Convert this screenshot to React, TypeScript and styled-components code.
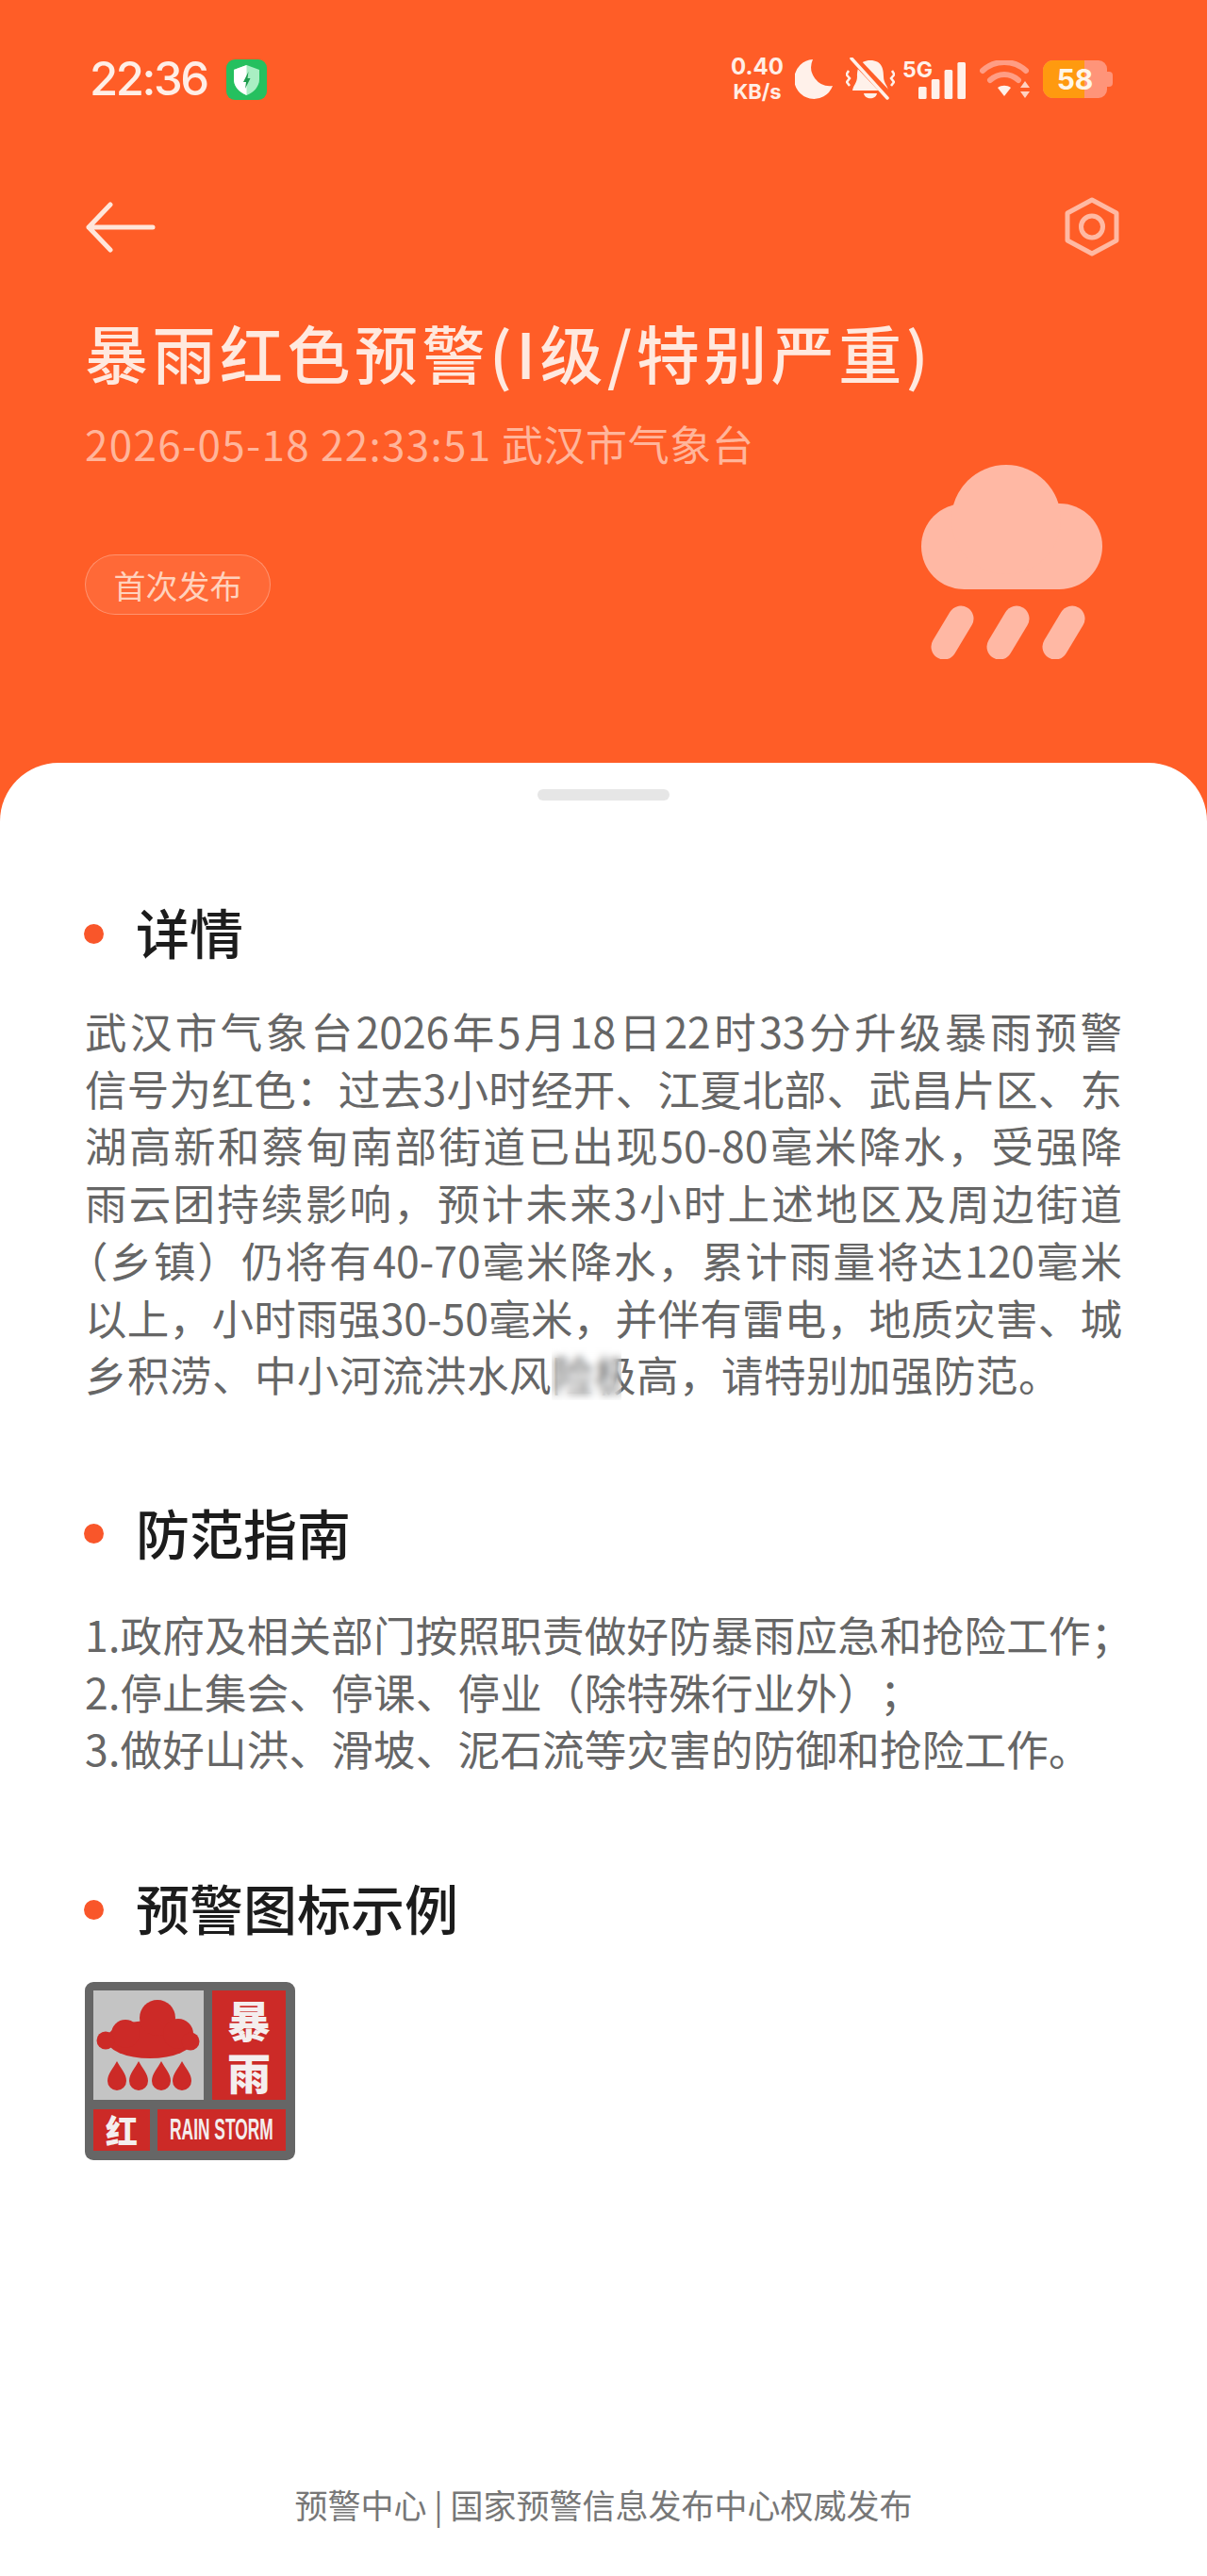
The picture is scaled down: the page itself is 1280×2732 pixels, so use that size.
import styled, { createGlobalStyle } from "styled-components"

const GlobalStyle = createGlobalStyle`
  html, body {
    margin: 0;
    padding: 0;
    background: #ff5d27;
  }
  * {
    box-sizing: border-box;
  }
`

const cjk = `"Noto Sans CJK SC", "Noto Sans", sans-serif`

const Page = styled.div`
  width: 1280px;
  height: 2732px;
  display: flex;
  flex-direction: column;
  background: #ff5d27;
  font-family: ${cjk};
  overflow: hidden;
`

const Header = styled.header`
  height: 809px;
  flex: none;
  padding: 60px 90px 0;
  display: flex;
  flex-direction: column;
`

const StatusBar = styled.div`
  height: 48px;
  display: flex;
  align-items: center;
  justify-content: space-between;
  color: #ffeee6;
`

const StatusLeft = styled.div`
  display: flex;
  align-items: center;
  gap: 20px;
  padding-left: 5px;
`

const Clock = styled.span`
  font-family: "Inter", sans-serif;
  font-size: 49px;
  font-weight: 500;
  letter-spacing: -2.4px;
  line-height: 48px;
`

const StatusRight = styled.div`
  display: flex;
  align-items: center;
  margin-right: 10px;
`

const Speed = styled.div`
  width: 56px;
  margin-right: 12px;
  display: flex;
  flex-direction: column;
  align-items: center;
  font-family: "Inter", sans-serif;
  font-weight: 700;
  line-height: 20px;
`

const SpeedValue = styled.span`
  font-size: 24px;
`

const SpeedUnit = styled.span`
  font-size: 22px;
  margin-top: 6px;
`

const SignalWrap = styled.div`
  position: relative;
  width: 68px;
  height: 46px;
  margin-left: 8px;
`

const NetworkLabel = styled.span`
  position: absolute;
  left: 0;
  top: 0;
  font-family: "Inter", sans-serif;
  font-size: 23px;
  font-weight: 700;
  line-height: 26px;
  color: #fff1ea;
`

const Battery = styled.div`
  position: relative;
  width: 68px;
  height: 40px;
  margin: 0 6px 0 13px;
  border-radius: 11px 9px 9px 11px;
  background: #ff9479;
  display: flex;
  align-items: center;
  justify-content: center;
  color: #fff6e8;
  font-family: "Inter", sans-serif;
  font-weight: 700;
  font-size: 30px;

  &::after {
    content: "";
    position: absolute;
    left: 100%;
    top: 12px;
    width: 6px;
    height: 16px;
    border-radius: 0 4px 4px 0;
    background: #ff9479;
  }
`

const BatteryFill = styled.span`
  position: absolute;
  left: 0;
  top: 0;
  bottom: 0;
  border-radius: 11px 0 0 11px;
  background: #ff9a0f;
`

const BatteryText = styled.span`
  position: relative;
`

const NavRow = styled.div`
  margin-top: 101px;
  height: 63px;
  padding-right: 3px;
  display: flex;
  align-items: center;
  justify-content: space-between;
`

const Title = styled.h1`
  margin: 53px 0 0;
  font-size: 67px;
  line-height: 96px;
  font-weight: 500;
  color: #ffe9df;
  letter-spacing: 4.5px;
  white-space: nowrap;
`

const Hero = styled.div`
  margin-top: 19px;
  display: flex;
  justify-content: space-between;
  align-items: flex-start;
`

const HeroText = styled.div`
  display: flex;
  flex-direction: column;
  align-items: flex-start;
`

const Meta = styled.div`
  font-size: 44px;
  line-height: 60px;
  letter-spacing: 0.6px;
  color: #ffb59b;
  white-space: nowrap;
`

const MetaTime = styled.span`
  letter-spacing: 1.3px;
`

const Chip = styled.div`
  margin-top: 88px;
  width: 197px;
  height: 64px;
  border-radius: 32px;
  border: 1.5px solid rgba(255, 255, 255, 0.28);
  background: rgba(255, 255, 255, 0.08);
  display: flex;
  align-items: center;
  justify-content: center;
  font-size: 34px;
  color: #ffd2bd;
`

const RainIcon = styled.svg`
  width: 192px;
  height: 206px;
  margin: 53px 21px 0 0;
  flex: none;
`

const Sheet = styled.main`
  flex: 1;
  background: #fff;
  border-radius: 62px 62px 0 0;
  padding: 28px 90px 0;
  display: flex;
  flex-direction: column;
`

const Handle = styled.div`
  width: 140px;
  height: 12px;
  border-radius: 6px;
  background: #e6e6e6;
  align-self: center;
`

const Section = styled.section<{ $gap: number }>`
  margin-top: ${({ $gap }) => $gap}px;
`

const Heading = styled.h2`
  margin: 0;
  height: 80px;
  display: flex;
  align-items: center;
  gap: 34px;
  font-size: 57px;
  font-weight: 500;
  color: #1c1c1c;

  &::before {
    content: "";
    width: 21px;
    height: 21px;
    margin: 6px 0 0 -1px;
    border-radius: 50%;
    background: #f9562a;
  }
`

const Body = styled.div<{ $top: number }>`
  margin-top: ${({ $top }) => $top}px;
  width: 1100px;
  font-size: 44.5px;
  line-height: 60.7px;
  color: #666;
  text-spacing-trim: space-all;
`

const Line = styled.div`
  letter-spacing: 0.25px;
  white-space: nowrap;
`

const JustifiedLine = styled.div`
  text-align: justify;
  text-align-last: justify;
`

const LastLine = styled.div`
  letter-spacing: 0.5px;
  white-space: nowrap;
`

const LeadParen = styled.span`
  margin-left: -20px;
`

const Masked = styled.span`
  position: relative;

  &::after {
    content: "";
    position: absolute;
    left: 0;
    top: 4px;
    bottom: 4px;
    width: 74px;
    backdrop-filter: blur(4px);
  }
`

const Badge = styled.div`
  margin-top: 40px;
  width: 223px;
  height: 189px;
  padding: 9px;
  border-radius: 9px;
  background: #666;
  display: grid;
  grid-template-columns: 60px 8px 49px 9px 78px;
  grid-template-rows: 116px 44px;
  row-gap: 10px;
`

const BadgeSky = styled.div`
  grid-column: 1 / 4;
  grid-row: 1;
  background: #c4c4c4;
`

const BadgeSign = styled.div`
  grid-column: 5;
  grid-row: 1;
  background: #cc2a27;
  display: flex;
  flex-direction: column;
  align-items: center;
  justify-content: center;
  color: #f4eeee;
  font-size: 46px;
  font-weight: 900;
  line-height: 55px;
`

const BadgeLevel = styled.div`
  grid-column: 1;
  grid-row: 2;
  background: #cc2a27;
  display: flex;
  align-items: center;
  justify-content: center;
  color: #f4eeee;
  font-size: 34px;
  font-weight: 900;
  line-height: 44px;
`

const BadgeName = styled.div`
  grid-column: 3 / 6;
  grid-row: 2;
  overflow: hidden;
  background: #cc2a27;
  display: flex;
  align-items: center;
  justify-content: center;
  color: #f4eeee;
`

const BadgeNameText = styled.span`
  flex: none;
  font-family: "Liberation Sans", sans-serif;
  font-size: 31px;
  font-weight: 700;
  white-space: nowrap;
  transform: scaleX(0.56);
`

const Footer = styled.footer`
  margin-top: auto;
  margin-bottom: 54px;
  text-align: center;
  font-size: 35px;
  line-height: 44px;
  color: #777;
`

function Shield() {
  return (
    <svg width="43" height="43" viewBox="0 0 43 43">
      <rect width="43" height="43" rx="9" fill="#25c05f" />
      <path d="M21.5 6 L35 11 V21 C35 29 29 35 21.5 38 C14 35 8 29 8 21 V11 Z" fill="#a9efc3" />
      <path d="M21.5 6 L8 11 V21 C8 29 14 35 21.5 38 Z" fill="#fff" />
      <path d="M23.5 13 L18 24 H21 L20 31 L25.5 20 H22.5 Z" fill="#1f9c4e" />
    </svg>
  )
}

function Moon() {
  return (
    <svg width="40" height="42" viewBox="0 0 40 42">
      <path d="M19 0 A21 21 0 1 0 40 28 A20 20 0 0 1 19 0 Z" fill="#fff1ea" />
    </svg>
  )
}

function MutedBell() {
  return (
    <svg width="52" height="46" viewBox="0 0 52 46" style={{ marginLeft: 14 }}>
      <path d="M26 3 C14 3 12 12 12 20 C12 27 8 29 7 35 H45 C44 29 40 27 40 20 C40 12 38 3 26 3 Z" fill="#fff1ea" />
      <path d="M19 38 H33 C32 45 20 45 19 38 Z" fill="#fff1ea" />
      <path d="M9 2 L46 41" stroke="#ff5d27" strokeWidth="8.5" />
      <path d="M6 1 L44 43" stroke="#fff1ea" strokeWidth="3.5" strokeLinecap="round" />
      <path d="M3 14 L0.5 18 L4 22 L1 26 L4 30" fill="none" stroke="#fff1ea" strokeWidth="2.5" />
      <path d="M49 14 L51.5 18 L48 22 L51 26 L48 30" fill="none" stroke="#fff1ea" strokeWidth="2.5" />
    </svg>
  )
}

function SignalBars() {
  return (
    <svg width="68" height="46" viewBox="0 0 68 46">
      <rect x="17" y="31" width="8.6" height="13" rx="1.5" fill="#fff1ea" />
      <rect x="30.8" y="23" width="8.6" height="21" rx="1.5" fill="#fff1ea" />
      <rect x="44.6" y="13" width="8.6" height="31" rx="1.5" fill="#fff1ea" />
      <rect x="58.4" y="5" width="8.6" height="39" rx="1.5" fill="#fff1ea" />
    </svg>
  )
}

function Wifi() {
  return (
    <svg width="54" height="40" viewBox="0 0 54 40" style={{ marginLeft: 14 }}>
      <path d="M3 11 C16 -1 36 -1 49 11" fill="none" stroke="#ff9d84" strokeWidth="6" strokeLinecap="round" />
      <path d="M11 21 C20 13 32 13 41 21" fill="none" stroke="#ff9d84" strokeWidth="6" strokeLinecap="round" />
      <path d="M19 29 C23 26 29 26 33 29 L26 38 Z" fill="#fff1ea" />
      <path d="M48 22 L53 29 H43 Z M48 40 L53 33 H43 Z" fill="#ffd2c2" />
    </svg>
  )
}

function BackArrow() {
  return (
    <svg width="75" height="54" viewBox="0 0 75 54">
      <path
        d="M72 27 H4 M27 3 L4 27 L27 51"
        fill="none"
        stroke="#ffe6da"
        strokeWidth="5"
        strokeLinecap="round"
        strokeLinejoin="round"
      />
    </svg>
  )
}

function SettingsHex() {
  return (
    <svg width="58" height="63" viewBox="0 0 58 63">
      <path
        d="M29 3 L55 17 V46 L29 60 L3 46 V17 Z"
        fill="none"
        stroke="#ffb9a3"
        strokeWidth="5"
        strokeLinejoin="round"
      />
      <circle cx="29" cy="31.5" r="11.5" fill="none" stroke="#ffb9a3" strokeWidth="5" />
    </svg>
  )
}

function BadgeCloud() {
  return (
    <svg width="117" height="116" viewBox="0 0 117 116">
      <g fill="#cc2a27">
        <ellipse cx="60" cy="52" rx="46" ry="20" />
        <circle cx="68" cy="29" r="19" />
        <circle cx="34" cy="46" r="15" />
        <circle cx="13" cy="53" r="9.5" />
        <circle cx="90" cy="46" r="16" />
        <circle cx="103" cy="54" r="9.5" />
      </g>
      {[25, 48, 72, 94].map((x) => (
        <path
          key={x}
          d={`M${x} 75 C${x + 4} 83 ${x + 10} 88 ${x + 10} 96 A10 10 0 0 1 ${x - 10} 96 C${x - 10} 88 ${x - 4} 83 ${x} 75 Z`}
          fill="#cc2a27"
        />
      ))}
    </svg>
  )
}

export default function App() {
  return (
    <Page>
      <GlobalStyle />
      <Header>
        <StatusBar>
          <StatusLeft>
            <Clock>22:36</Clock>
            <Shield />
          </StatusLeft>
          <StatusRight>
            <Speed>
              <SpeedValue>0.40</SpeedValue>
              <SpeedUnit>KB/s</SpeedUnit>
            </Speed>
            <Moon />
            <MutedBell />
            <SignalWrap>
              <NetworkLabel>5G</NetworkLabel>
              <SignalBars />
            </SignalWrap>
            <Wifi />
            <Battery>
              <BatteryFill style={{ width: "65%" }} />
              <BatteryText>58</BatteryText>
            </Battery>
          </StatusRight>
        </StatusBar>

        <NavRow>
          <BackArrow />
          <SettingsHex />
        </NavRow>

        <Title>暴雨红色预警(I级/特别严重)</Title>

        <Hero>
          <HeroText>
            <Meta>
              <MetaTime>2026-05-18 22:33:51</MetaTime> 武汉市气象台
            </Meta>
            <Chip>首次发布</Chip>
          </HeroText>
          <RainIcon viewBox="0 0 192 206">
            <g fill="#ffb8a4">
              <rect x="0" y="41" width="192" height="91" rx="45.5" />
              <circle cx="90" cy="58" r="58" />
            </g>
            <g stroke="#ffb8a4" strokeWidth="27" strokeLinecap="round">
              <path d="M42 163 L24 193" />
              <path d="M101 163 L83 193" />
              <path d="M160 163 L142 193" />
            </g>
          </RainIcon>
        </Hero>
      </Header>

      <Sheet>
        <Handle />

        <Section $gap={98}>
          <Heading>详情</Heading>
          <Body $top={36}>
            <JustifiedLine>武汉市气象台2026年5月18日22时33分升级暴雨预警</JustifiedLine>
            <JustifiedLine>信号为红色：过去3小时经开、江夏北部、武昌片区、东</JustifiedLine>
            <JustifiedLine>湖高新和蔡甸南部街道已出现50-80毫米降水，受强降</JustifiedLine>
            <JustifiedLine>雨云团持续影响，预计未来3小时上述地区及周边街道</JustifiedLine>
            <JustifiedLine>
              <LeadParen>（</LeadParen>乡镇）仍将有40-70毫米降水，累计雨量将达120毫米
            </JustifiedLine>
            <JustifiedLine>以上，小时雨强30-50毫米，并伴有雷电，地质灾害、城</JustifiedLine>
            <LastLine>
              乡积涝、中小河流洪水风<Masked>险</Masked>极高，请特别加强防范。
            </LastLine>
          </Body>
        </Section>

        <Section $gap={96}>
          <Heading>防范指南</Heading>
          <Body $top={39}>
            <Line>1.政府及相关部门按照职责做好防暴雨应急和抢险工作；</Line>
            <Line>2.停止集会、停课、停业（除特殊行业外）；</Line>
            <Line>3.做好山洪、滑坡、泥石流等灾害的防御和抢险工作。</Line>
          </Body>
        </Section>

        <Section $gap={97}>
          <Heading>预警图标示例</Heading>
          <Badge>
            <BadgeSky>
              <BadgeCloud />
            </BadgeSky>
            <BadgeSign>
              <span>暴</span>
              <span>雨</span>
            </BadgeSign>
            <BadgeLevel>红</BadgeLevel>
            <BadgeName>
              <BadgeNameText>RAIN STORM</BadgeNameText>
            </BadgeName>
          </Badge>
        </Section>

        <Footer>预警中心 | 国家预警信息发布中心权威发布</Footer>
      </Sheet>
    </Page>
  )
}
